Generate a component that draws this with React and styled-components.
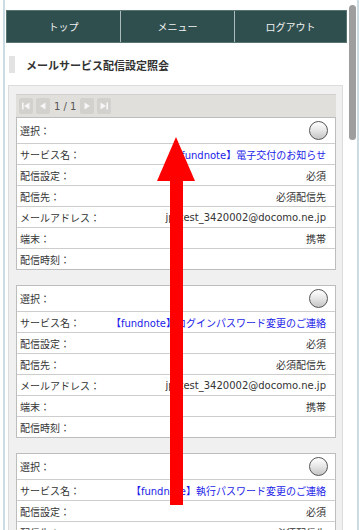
import React from "react";
import styled, { createGlobalStyle } from "styled-components";

const GlobalStyle = createGlobalStyle`
  html, body {
    margin: 0;
    padding: 0;
    overflow: hidden;
    background: #ffffff;
    font-family: "DejaVu Sans", "Noto Sans CJK JP", sans-serif;
  }
  * { box-sizing: border-box; }
`;

const Page = styled.div`
  position: relative;
  display: flex;
  height: 530px;
  padding-left: 3px;
  overflow: hidden;
`;

const Rule = styled.div`
  width: 2px;
  flex: none;
  background: #cbdde2;
`;

const Main = styled.div`
  width: 341px;
  flex: none;
  margin-left: 1px;
  padding-top: 10px;
`;

const ScrollTrack = styled.div`
  width: 7px;
  flex: none;
  margin: 0 1px 0 2px;
  padding-top: 5px;
`;

const Thumb = styled.div`
  height: 135px;
  border-radius: 4px;
  background: #9e9e9e;
`;

const Nav = styled.nav`
  display: grid;
  grid-template-columns: 113px 114px 1fr;
  height: 33px;
  background: #2f4f4f;
  border: 1px solid #587473;
`;

const NavItem = styled.div`
  display: flex;
  align-items: center;
  justify-content: center;
  color: #f2f2f2;
  font-size: 10px;
  font-family: "Noto Sans CJK JP", sans-serif;
  border-left: ${(p) => (p.$first ? "none" : "1px solid #a9bcbb")};
`;

const TitleRow = styled.div`
  display: flex;
  align-items: center;
  height: 17px;
  margin: 13px 0 12px 3px;
`;

const TitleBar = styled.div`
  width: 6px;
  height: 17px;
  background: #e3e3e3;
`;

const Title = styled.h1`
  margin: 0 0 0 11px;
  font-size: 11px;
  font-weight: bold;
  color: #333;
  font-family: "Noto Sans CJK JP", sans-serif;
`;

const Panel = styled.section`
  margin-left: 2px;
  width: 335px;
  background: #f0f0f0;
  border: 1px solid #dcdcdc;
  padding: 8px 6px 0 7px;
`;

const Pager = styled.div`
  display: flex;
  align-items: center;
  gap: 3px;
  height: 23px;
  padding-left: 3px;
  background: #e1dfdb;
  border-top: 1px solid #d2d0cc;
`;

const PagerButton = styled.div`
  width: 14px;
  height: 16px;
  border-radius: 2px;
  background: #d3d1cd;
  display: flex;
  align-items: center;
  justify-content: center;
`;

const PagerText = styled.span`
  font-size: 10px;
  color: #555;
  margin: 0 1px;
`;

const Card = styled.div`
  background: #fff;
  border: 1px solid #bdbdbd;
  margin-bottom: 15px;
`;

const Row = styled.div`
  display: flex;
  align-items: center;
  justify-content: space-between;
  height: ${(p) => (p.$tall ? "25px" : "21px")};
  padding: 0 9px 0 3px;
  border-top: ${(p) => (p.$tall ? "none" : "1px solid #cdcdcd")};
  font-size: 10px;
  color: #333;
  white-space: nowrap;
`;

const Value = styled.span`
  color: ${(p) => (p.$link ? "#1c1ce8" : "#333")};
`;

const Radio = styled.span`
  width: 19px;
  height: 19px;
  margin-right: -2px;
  border-radius: 50%;
  border: 1.5px solid #555;
  background: linear-gradient(180deg, #ffffff 0%, #e6e6e6 50%, #c4c4c4 100%);
`;

const Arrow = styled.svg`
  position: absolute;
  left: 0;
  top: 0;
  pointer-events: none;
`;

const items = [
  "【fundnote】電子交付のお知らせ",
  "【fundnote】ログインパスワード変更のご連絡",
  "【fundnote】執行パスワード変更のご連絡",
];

const Glyph = ({ kind }) => {
  const fill = "#f6f6f6";
  if (kind === "first")
    return (
      <svg width="10" height="10" viewBox="0 0 10 10">
        <rect x="1" y="1.5" width="1.6" height="7" fill={fill} />
        <polygon points="3,5 8.5,1.5 8.5,8.5" fill={fill} />
      </svg>
    );
  if (kind === "prev")
    return (
      <svg width="10" height="10" viewBox="0 0 10 10">
        <polygon points="2,5 7.5,1.5 7.5,8.5" fill={fill} />
      </svg>
    );
  if (kind === "next")
    return (
      <svg width="10" height="10" viewBox="0 0 10 10">
        <polygon points="8,5 2.5,1.5 2.5,8.5" fill={fill} />
      </svg>
    );
  return (
    <svg width="10" height="10" viewBox="0 0 10 10">
      <polygon points="7,5 1.5,1.5 1.5,8.5" fill={fill} />
      <rect x="7.4" y="1.5" width="1.6" height="7" fill={fill} />
    </svg>
  );
};

const ServiceCard = ({ name }) => (
  <Card>
    <Row $tall>
      <span>選択：</span>
      <Radio />
    </Row>
    <Row>
      <span>サービス名：</span>
      <Value $link>{name}</Value>
    </Row>
    <Row>
      <span>配信設定：</span>
      <Value>必須</Value>
    </Row>
    <Row>
      <span>配信先：</span>
      <Value>必須配信先</Value>
    </Row>
    <Row>
      <span>メールアドレス：</span>
      <Value>jp_test_3420002@docomo.ne.jp</Value>
    </Row>
    <Row>
      <span>端末：</span>
      <Value>携帯</Value>
    </Row>
    <Row>
      <span>配信時刻：</span>
      <Value />
    </Row>
  </Card>
);

export default function App() {
  return (
    <>
      <GlobalStyle />
      <Page>
        <Rule />
        <Main>
          <Nav>
            <NavItem $first>トップ</NavItem>
            <NavItem>メニュー</NavItem>
            <NavItem>ログアウト</NavItem>
          </Nav>
          <TitleRow>
            <TitleBar />
            <Title>メールサービス配信設定照会</Title>
          </TitleRow>
          <Panel>
            <Pager>
              <PagerButton><Glyph kind="first" /></PagerButton>
              <PagerButton><Glyph kind="prev" /></PagerButton>
              <PagerText>1 / 1</PagerText>
              <PagerButton><Glyph kind="next" /></PagerButton>
              <PagerButton><Glyph kind="last" /></PagerButton>
            </Pager>
            {items.map((n) => (
              <ServiceCard key={n} name={n} />
            ))}
          </Panel>
        </Main>
        <ScrollTrack>
          <Thumb />
        </ScrollTrack>
        <Rule />
        <Arrow width="359" height="530" viewBox="0 0 359 530">
          <polygon points="157,181 176,137 195,181" fill="#ff0000" />
          <rect x="170" y="180" width="13" height="325" fill="#ff0000" />
        </Arrow>
      </Page>
    </>
  );
}
